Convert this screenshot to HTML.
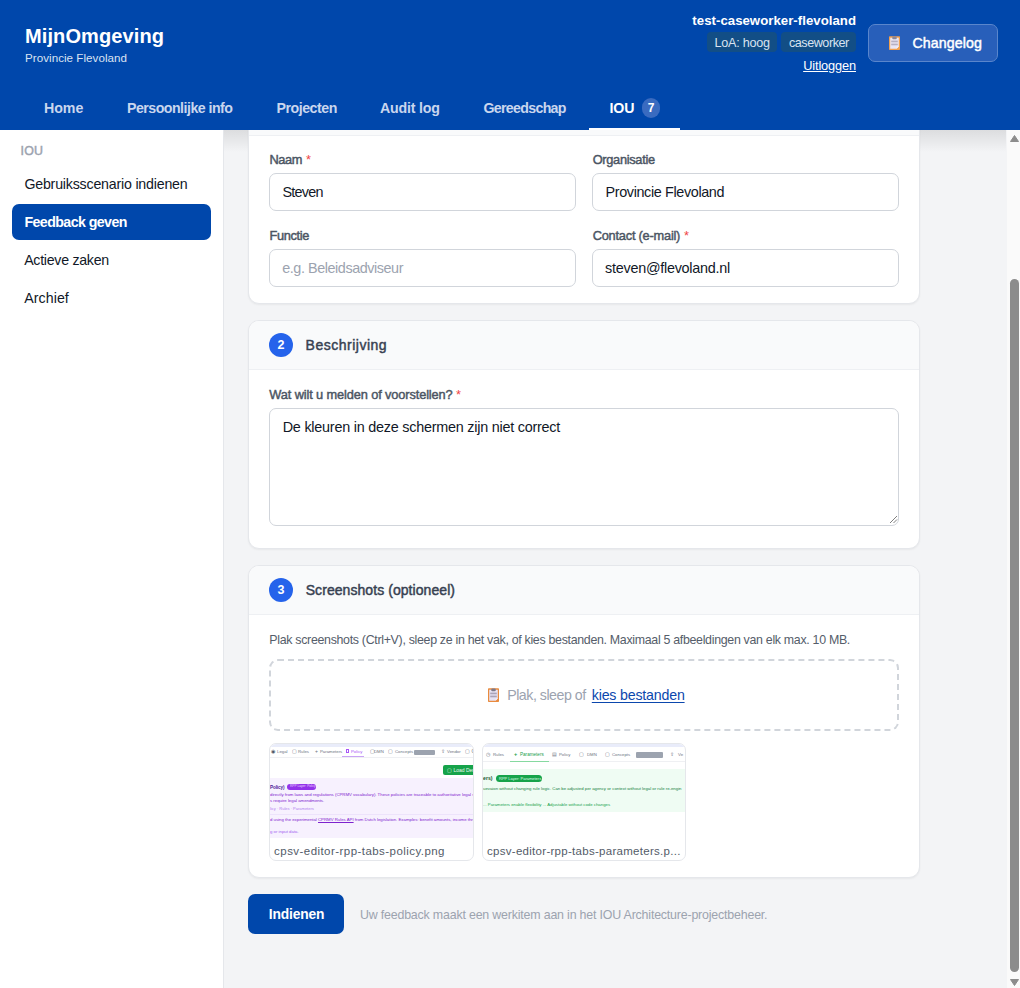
<!DOCTYPE html>
<html lang="nl">
<head>
<meta charset="utf-8">
<title>MijnOmgeving - Feedback geven</title>
<style>
html,body{margin:0;padding:0;}
body{width:1020px;height:988px;overflow:hidden;position:relative;background:#f3f4f6;font-family:"Liberation Sans",sans-serif;}
.ab{position:absolute;box-sizing:border-box;}
.tx{position:absolute;white-space:nowrap;z-index:5;}
.hdr{left:0;top:0;width:1020px;height:130px;background:#0047ab;z-index:3;}
.side{left:0;top:130px;width:224px;height:858px;background:#fff;border-right:1px solid #e5e7eb;z-index:1;}
.grad{left:224px;top:130px;width:782px;height:22px;background:linear-gradient(#dcdddf,#f3f4f6);z-index:0;}
.card{left:248px;width:672px;background:#fff;border:1px solid #e5e7eb;border-radius:11px;box-shadow:0 1px 2px rgba(0,0,0,.05);overflow:hidden;z-index:1;}
.chead{position:absolute;left:0;top:0;width:670px;height:49px;background:#f9fafb;border-bottom:1px solid #eef0f3;box-sizing:border-box;}
.inp{background:#fff;border:1px solid #d1d5db;border-radius:7px;z-index:2;}
.circ{width:24px;height:24px;border-radius:50%;background:#2563eb;color:#fff;font:700 12.5px/25.5px "Liberation Sans",sans-serif;text-align:center;z-index:2;}
.badge{top:32px;height:20px;background:#124e86;border-radius:4px;z-index:4;}
.thumb{top:743px;height:118px;background:#fff;border:1px solid #e5e7eb;border-radius:7px;overflow:hidden;z-index:2;}
.mini{position:absolute;white-space:nowrap;font-family:"Liberation Sans",sans-serif;}
.sb{left:1007px;top:130px;width:14px;height:858px;background:#fafafa;z-index:6;}
</style>
</head>
<body>
<!-- main background shadow under header -->
<div class="ab grad"></div>

<!-- header -->
<div class="ab hdr"></div>
<div class="ab badge" style="left:707px;width:70px;"></div>
<div class="ab badge" style="left:781px;width:75px;"></div>
<div class="ab" style="left:868px;top:24px;width:130px;height:38px;border-radius:7px;background:#285fba;border:1px solid #5a86cc;z-index:4;"></div>
<svg class="ab" style="left:889px;top:36px;z-index:6" width="11" height="14" viewBox="0 0 11 14">
  <rect x="0" y="0.3" width="11" height="13.7" rx="0.8" fill="#f2a04e"/>
  <path d="M1.2 1.8 H9.8 V10.6 L7.6 12.8 H1.2 Z" fill="#e9e6f4"/>
  <path d="M9.8 10.6 L7.6 12.8 L7.6 10.6 Z" fill="#f4f2fa"/>
  <rect x="3.2" y="0.6" width="4.6" height="2.6" rx="1.2" fill="#8c8796"/>
  <rect x="2.2" y="4.6" width="6.6" height="1.7" fill="#b6b0c2"/>
  <rect x="2.2" y="7.6" width="6.6" height="1.7" fill="#b6b0c2"/>
</svg>
<div class="ab" style="left:589px;top:128px;width:91px;height:2px;background:#fff;z-index:4;"></div>
<div class="ab" style="left:642px;top:98px;width:18px;height:20px;border-radius:10px;background:#3a6bc0;z-index:4;color:#fff;font:700 12px/20px 'Liberation Sans',sans-serif;text-align:center;">7</div>

<!-- sidebar -->
<div class="ab side"></div>
<div class="ab" style="left:12px;top:204px;width:199px;height:36px;border-radius:7px;background:#0047ab;z-index:2;"></div>

<!-- card 1 -->
<div class="ab card" style="top:80px;height:224px;">
  <div class="chead" style="height:55px;"></div>
</div>
<div class="ab inp" style="left:269px;top:173px;width:307px;height:38px;"></div>
<div class="ab inp" style="left:592px;top:173px;width:307px;height:38px;"></div>
<div class="ab inp" style="left:269px;top:249px;width:307px;height:38px;"></div>
<div class="ab inp" style="left:592px;top:249px;width:307px;height:38px;"></div>

<!-- card 2 -->
<div class="ab card" style="top:320px;height:229px;">
  <div class="chead"></div>
</div>
<div class="ab circ" style="left:269px;top:333px;">2</div>
<div class="ab inp" style="left:269px;top:408px;width:630px;height:118px;"></div>
<svg class="ab" style="left:889px;top:515px;z-index:3" width="9" height="9" viewBox="0 0 9 9">
  <line x1="1" y1="8" x2="8" y2="1" stroke="#808080" stroke-width="1"/>
  <line x1="4.5" y1="8" x2="8" y2="4.5" stroke="#808080" stroke-width="1"/>
</svg>

<!-- card 3 -->
<div class="ab card" style="top:565px;height:313px;">
  <div class="chead"></div>
</div>
<div class="ab circ" style="left:269px;top:578px;">3</div>
<div class="ab" style="left:269px;top:659px;width:630px;height:72px;border:2px dashed #d1d5db;border-radius:9px;z-index:2;"></div>
<svg class="ab" style="left:488px;top:688px;z-index:6" width="11" height="14" viewBox="0 0 11 14">
  <rect x="0" y="0.3" width="11" height="13.7" rx="0.8" fill="#e98b3e"/>
  <path d="M1.2 1.8 H9.8 V10.6 L7.6 12.8 H1.2 Z" fill="#e7e3f5"/>
  <path d="M9.8 10.6 L7.6 12.8 L7.6 10.6 Z" fill="#f4f2fa"/>
  <rect x="3.2" y="0.6" width="4.6" height="2.6" rx="1.2" fill="#7e7989"/>
  <rect x="2.2" y="4.6" width="6.6" height="1.7" fill="#aaa3b8"/>
  <rect x="2.2" y="7.6" width="6.6" height="1.7" fill="#aaa3b8"/>
</svg>

<!-- thumbnail 1 -->
<div class="ab thumb" style="left:269px;width:205px;">
  <div class="mini" style="left:0;top:0;width:205px;height:3px;background:#e9ecfa;"></div>
  <div class="mini" style="left:0;top:13px;width:205px;height:1px;background:#eff0f3;"></div>
  <div class="mini" style="left:72px;top:12px;width:22px;height:1px;background:#c9a3f5;"></div>
  <span class="mini" style="left:1px;top:4px;font-size:5px;line-height:7px;color:#4b5563;">&#9673;</span>
  <span class="mini" style="left:7px;top:4px;font-size:4.3px;line-height:7px;color:#6b7280;">Legal</span>
  <span class="mini" style="left:22px;top:4px;font-size:5px;line-height:7px;color:#6b7280;">&#9634;</span>
  <span class="mini" style="left:28px;top:4px;font-size:4.3px;line-height:7px;color:#6b7280;">Rules</span>
  <span class="mini" style="left:45px;top:4px;font-size:5px;line-height:7px;color:#6b7280;">+</span>
  <span class="mini" style="left:50px;top:4px;font-size:4.3px;line-height:7px;color:#6b7280;">Parameters</span>
  <div class="mini" style="left:76px;top:5px;width:3px;height:4px;border:1px solid #a855f7;box-sizing:border-box;"></div>
  <span class="mini" style="left:81px;top:4px;font-size:4.3px;line-height:7px;color:#a855f7;">Policy</span>
  <span class="mini" style="left:100px;top:4px;font-size:5px;line-height:7px;color:#6b7280;">&#9634;</span>
  <span class="mini" style="left:104px;top:4px;font-size:4.3px;line-height:7px;color:#6b7280;">DMN</span>
  <span class="mini" style="left:118px;top:4px;font-size:5px;line-height:7px;color:#6b7280;">&#9634;</span>
  <span class="mini" style="left:125px;top:4px;font-size:4.3px;line-height:7px;color:#6b7280;">Concepts</span>
  <div class="mini" style="left:144px;top:6px;width:21px;height:5px;border-radius:1px;background:#9ca3af;"></div>
  <span class="mini" style="left:171px;top:4px;font-size:5px;line-height:7px;color:#6b7280;">&#8682;</span>
  <span class="mini" style="left:177px;top:4px;font-size:4.3px;line-height:7px;color:#6b7280;">Vendor</span>
  <span class="mini" style="left:195px;top:4px;font-size:5px;line-height:7px;color:#6b7280;">&#9634; C</span>
  <div class="mini" style="left:173px;top:21px;width:40px;height:10px;border-radius:2px;background:#16a34a;"></div>
  <span class="mini" style="left:177px;top:22.5px;font-size:5px;line-height:7px;color:#e8f7ee;">&#9634; Load Dem</span>
  <div class="mini" style="left:0;top:34px;width:205px;height:60px;background:#f7f1fe;"></div>
  <span class="mini" style="left:0;top:39.5px;font-size:4.6px;line-height:7px;color:#4c1d95;font-weight:700;letter-spacing:-0.1px;">Policy)</span>
  <div class="mini" style="left:17px;top:40px;width:29px;height:5.5px;border-radius:3px;background:#9333ea;"></div>
  <span class="mini" style="left:20px;top:40px;font-size:3.2px;line-height:5.5px;color:#e9d5ff;">RPP Layer: Policy</span>
  <span class="mini" style="left:0;top:48px;font-size:4.3px;line-height:6px;color:#7e22ce;">directly from laws and regulations (CPRMV vocabulary). These policies are traceable to authoritative legal sources and remain</span>
  <span class="mini" style="left:0;top:54px;font-size:4.3px;line-height:6px;color:#7e22ce;">s require legal amendments.</span>
  <span class="mini" style="left:0;top:62px;font-size:4px;line-height:6px;color:#b07ef0;">licy · Rules · Parameters</span>
  <div class="mini" style="left:0;top:70px;width:205px;height:1px;background:#ede3fb;"></div>
  <span class="mini" style="left:0;top:73px;font-size:4.3px;line-height:6px;color:#7e22ce;">d using the experimental <u>CPRMV Rules API</u> from Dutch legislation. Examples: benefit amounts, income thresholds, percentag</span>
  <span class="mini" style="left:0;top:85px;font-size:4.3px;line-height:6px;color:#9f5ef0;">g or input data.</span>
</div>
<!-- thumbnail 2 -->
<div class="ab thumb" style="left:482px;width:204px;">
  <div class="mini" style="left:0;top:0;width:204px;height:3px;background:#e9ecfa;"></div>
  <div class="mini" style="left:0;top:17px;width:204px;height:1px;background:#eff0f3;"></div>
  <div class="mini" style="left:27px;top:16.5px;width:39px;height:1.5px;background:#86d9a0;"></div>
  <span class="mini" style="left:3px;top:7px;font-size:5px;line-height:7px;color:#6b7280;">&#9719;</span>
  <span class="mini" style="left:10px;top:7px;font-size:4.3px;line-height:7px;color:#6b7280;">Rules</span>
  <span class="mini" style="left:31px;top:7px;font-size:5.5px;line-height:7px;color:#16a34a;font-weight:700;">+</span>
  <span class="mini" style="left:37px;top:7px;font-size:4.6px;line-height:7px;color:#22a04f;">Parameters</span>
  <span class="mini" style="left:69px;top:7px;font-size:5px;line-height:7px;color:#6b7280;">&#9636;</span>
  <span class="mini" style="left:76px;top:7px;font-size:4.3px;line-height:7px;color:#6b7280;">Policy</span>
  <span class="mini" style="left:96px;top:7px;font-size:5px;line-height:7px;color:#6b7280;">&#9634;</span>
  <span class="mini" style="left:104px;top:7px;font-size:4.3px;line-height:7px;color:#6b7280;">DMN</span>
  <span class="mini" style="left:122px;top:7px;font-size:5px;line-height:7px;color:#6b7280;">&#9634;</span>
  <span class="mini" style="left:129px;top:7px;font-size:4.3px;line-height:7px;color:#6b7280;">Concepts</span>
  <div class="mini" style="left:153px;top:8px;width:27px;height:6px;border-radius:1px;background:#9ca3af;"></div>
  <span class="mini" style="left:187px;top:7px;font-size:5px;line-height:7px;color:#6b7280;">&#8682;</span>
  <span class="mini" style="left:195px;top:7px;font-size:4.3px;line-height:7px;color:#6b7280;">Ve</span>
  <div class="mini" style="left:0;top:25px;width:204px;height:43px;background:#effcf3;"></div>
  <span class="mini" style="left:0;top:31px;font-size:5.2px;line-height:7px;color:#14532d;font-weight:700;">ers)</span>
  <div class="mini" style="left:13px;top:31px;width:46px;height:7px;border-radius:3.5px;background:#16a34a;"></div>
  <span class="mini" style="left:16px;top:31.5px;font-size:4px;line-height:6px;color:#dcfce7;">RPP Layer: Parameters</span>
  <span class="mini" style="left:0;top:41.5px;font-size:4.3px;line-height:6px;color:#15803d;">uevaion without changing rule logic. Can be adjusted per agency or context without legal or rule re-engin</span>
  <span class="mini" style="left:0;top:57.5px;font-size:4.3px;line-height:6px;color:#16a34a;">... Parameters enable flexibility ... Adjustable without code changes</span>
</div>

<!-- submit -->
<div class="ab" style="left:248px;top:894px;width:96px;height:40px;border-radius:7px;background:#0047ab;z-index:2;"></div>

<!-- scrollbar -->
<div class="ab sb"></div>
<div class="ab" style="left:1010px;top:279px;width:9px;height:693px;border-radius:4.5px;background:#8c8c8c;z-index:7;"></div>
<svg class="ab" style="left:1008px;top:133px;z-index:7" width="12" height="10" viewBox="0 0 12 10"><path d="M6.5 2.5 L10.5 8.5 L2.5 8.5 Z" fill="#8c8c8c" stroke="#8c8c8c" stroke-width="1" stroke-linejoin="round"/></svg>
<svg class="ab" style="left:1008px;top:977px;z-index:7" width="12" height="10" viewBox="0 0 12 10"><path d="M6.5 8.5 L10.5 2.5 L2.5 2.5 Z" fill="#8c8c8c" stroke="#8c8c8c" stroke-width="1" stroke-linejoin="round"/></svg>

<span class="tx" id="t0" style="left:25px;top:22.87px;font-size:20px;line-height:26px;font-weight:700;color:#ffffff;letter-spacing:0.109px;">MijnOmgeving</span>
<span class="tx" id="t1" style="left:25px;top:50.48px;font-size:11.6px;line-height:15px;font-weight:400;color:#dae3f2;letter-spacing:0.045px;">Provincie Flevoland</span>
<span class="tx" id="t2" style="left:856px;transform:translateX(-100%);top:11.73px;font-size:13.2px;line-height:17px;font-weight:700;color:#ffffff;letter-spacing:0.037px;">test-caseworker-flevoland</span>
<span class="tx" id="t3" style="left:714.5px;top:34.83px;font-size:12.6px;line-height:16px;font-weight:400;color:#d9e3f1;letter-spacing:-0.242px;">LoA: hoog</span>
<span class="tx" id="t4" style="left:789px;top:34.83px;font-size:12.6px;line-height:16px;font-weight:400;color:#d9e3f1;letter-spacing:-0.466px;">caseworker</span>
<span class="tx" id="t5" style="left:856px;transform:translateX(-100%);top:57.36px;font-size:12.8px;line-height:17px;font-weight:400;color:#ffffff;letter-spacing:-0.135px;text-decoration:underline;text-underline-offset:1px;">Uitloggen</span>
<span class="tx" id="t6" style="left:912.5px;top:34.28px;font-size:14.2px;line-height:18px;font-weight:400;-webkit-text-stroke:0.45px #ffffff;color:#ffffff;letter-spacing:0.082px;">Changelog</span>
<span class="tx" id="t7" style="left:44px;top:99.08px;font-size:14.2px;line-height:18px;font-weight:700;color:#c9d6ee;letter-spacing:-0.041px;">Home</span>
<span class="tx" id="t8" style="left:127px;top:99.08px;font-size:14.2px;line-height:18px;font-weight:700;color:#c9d6ee;letter-spacing:-0.520px;">Persoonlijke info</span>
<span class="tx" id="t9" style="left:276.4px;top:99.08px;font-size:14.2px;line-height:18px;font-weight:700;color:#c9d6ee;letter-spacing:-0.457px;">Projecten</span>
<span class="tx" id="t10" style="left:380px;top:99.08px;font-size:14.2px;line-height:18px;font-weight:700;color:#c9d6ee;letter-spacing:-0.184px;">Audit log</span>
<span class="tx" id="t11" style="left:483.5px;top:99.08px;font-size:14.2px;line-height:18px;font-weight:700;color:#c9d6ee;letter-spacing:-0.691px;">Gereedschap</span>
<span class="tx" id="t12" style="left:609.4px;top:99.08px;font-size:14.2px;line-height:18px;font-weight:700;color:#ffffff;letter-spacing:-0.017px;">IOU</span>
<span class="tx" id="t13" style="left:20.5px;top:142.70px;font-size:12.4px;line-height:16px;font-weight:400;-webkit-text-stroke:0.45px #9ca3af;color:#9ca3af;letter-spacing:0.234px;">IOU</span>
<span class="tx" id="t14" style="left:24.4px;top:175.08px;font-size:14.2px;line-height:18px;font-weight:400;color:#111827;letter-spacing:-0.196px;">Gebruiksscenario indienen</span>
<span class="tx" id="t15" style="left:24.4px;top:213.08px;font-size:14.2px;line-height:18px;font-weight:700;color:#ffffff;letter-spacing:-0.570px;">Feedback geven</span>
<span class="tx" id="t16" style="left:24.2px;top:251.08px;font-size:14.2px;line-height:18px;font-weight:400;color:#111827;letter-spacing:-0.277px;">Actieve zaken</span>
<span class="tx" id="t17" style="left:24.2px;top:289.08px;font-size:14.2px;line-height:18px;font-weight:400;color:#111827;letter-spacing:0.074px;">Archief</span>
<span class="tx" id="t18" style="left:269.4px;top:151.06px;font-size:12.8px;line-height:17px;font-weight:400;-webkit-text-stroke:0.45px #4b5563;color:#4b5563;letter-spacing:-0.380px;">Naam</span>
<span class="tx" id="t19" style="left:306px;top:151.06px;font-size:12.8px;line-height:17px;font-weight:400;color:#ef4444;letter-spacing:0.000px;">*</span>
<span class="tx" id="t20" style="left:592.7px;top:151.06px;font-size:12.8px;line-height:17px;font-weight:400;-webkit-text-stroke:0.45px #4b5563;color:#4b5563;letter-spacing:-0.305px;">Organisatie</span>
<span class="tx" id="t21" style="left:282.5px;top:182.51px;font-size:14.4px;line-height:19px;font-weight:400;color:#111827;letter-spacing:-0.762px;">Steven</span>
<span class="tx" id="t22" style="left:605.5px;top:182.51px;font-size:14.4px;line-height:19px;font-weight:400;color:#111827;letter-spacing:-0.366px;">Provincie Flevoland</span>
<span class="tx" id="t23" style="left:269.4px;top:227.06px;font-size:12.8px;line-height:17px;font-weight:400;-webkit-text-stroke:0.45px #4b5563;color:#4b5563;letter-spacing:-0.328px;">Functie</span>
<span class="tx" id="t24" style="left:592.7px;top:227.06px;font-size:12.8px;line-height:17px;font-weight:400;-webkit-text-stroke:0.45px #4b5563;color:#4b5563;letter-spacing:-0.222px;">Contact (e-mail)</span>
<span class="tx" id="t25" style="left:684px;top:227.06px;font-size:12.8px;line-height:17px;font-weight:400;color:#ef4444;letter-spacing:0.000px;">*</span>
<span class="tx" id="t26" style="left:282.2px;top:259.01px;font-size:14.4px;line-height:19px;font-weight:400;color:#9ca3af;letter-spacing:-0.437px;">e.g. Beleidsadviseur</span>
<span class="tx" id="t27" style="left:605.1px;top:259.01px;font-size:14.4px;line-height:19px;font-weight:400;color:#111827;letter-spacing:-0.267px;">steven@flevoland.nl</span>
<span class="tx" id="t28" style="left:305.6px;top:336.15px;font-size:14px;line-height:18px;font-weight:400;-webkit-text-stroke:0.45px #374151;color:#374151;letter-spacing:0.501px;">Beschrijving</span>
<span class="tx" id="t29" style="left:269.3px;top:386.06px;font-size:12.8px;line-height:17px;font-weight:400;-webkit-text-stroke:0.45px #4b5563;color:#4b5563;letter-spacing:-0.122px;">Wat wilt u melden of voorstellen?</span>
<span class="tx" id="t30" style="left:456px;top:386.06px;font-size:12.8px;line-height:17px;font-weight:400;color:#ef4444;letter-spacing:0.000px;">*</span>
<span class="tx" id="t31" style="left:282.7px;top:417.51px;font-size:14.4px;line-height:19px;font-weight:400;color:#111827;letter-spacing:-0.235px;">De kleuren in deze schermen zijn niet correct</span>
<span class="tx" id="t32" style="left:305.7px;top:581.15px;font-size:14px;line-height:18px;font-weight:400;-webkit-text-stroke:0.45px #374151;color:#374151;letter-spacing:0.065px;">Screenshots (optioneel)</span>
<span class="tx" id="t33" style="left:269.3px;top:631.70px;font-size:12.4px;line-height:16px;font-weight:400;color:#555d6a;letter-spacing:-0.309px;">Plak screenshots (Ctrl+V), sleep ze in het vak, of kies bestanden. Maximaal 5 afbeeldingen van elk max. 10 MB.</span>
<span class="tx" id="t34" style="left:507.2px;top:686.08px;font-size:14.2px;line-height:18px;font-weight:400;color:#9ca3af;letter-spacing:-0.476px;">Plak, sleep of</span>
<span class="tx" id="t35" style="left:591.8px;top:686.08px;font-size:14.2px;line-height:18px;font-weight:400;color:#0b47ad;letter-spacing:-0.189px;text-decoration:underline;text-underline-offset:2px;">kies bestanden</span>
<span class="tx" id="t36" style="left:274.1px;top:843.72px;font-size:11.5px;line-height:15px;font-weight:400;color:#535b68;letter-spacing:0.446px;">cpsv-editor-rpp-tabs-policy.png</span>
<span class="tx" id="t37" style="left:487px;top:843.72px;font-size:11.5px;line-height:15px;font-weight:400;color:#535b68;letter-spacing:0.285px;">cpsv-editor-rpp-tabs-parameters.p...</span>
<span class="tx" id="t38" style="left:268.7px;top:905.72px;font-size:13.8px;line-height:18px;font-weight:700;color:#ffffff;letter-spacing:-0.133px;">Indienen</span>
<span class="tx" id="t39" style="left:360px;top:906.70px;font-size:12.4px;line-height:16px;font-weight:400;color:#9ca3af;letter-spacing:-0.184px;">Uw feedback maakt een werkitem aan in het IOU Architecture-projectbeheer.</span>
</body>
</html>
